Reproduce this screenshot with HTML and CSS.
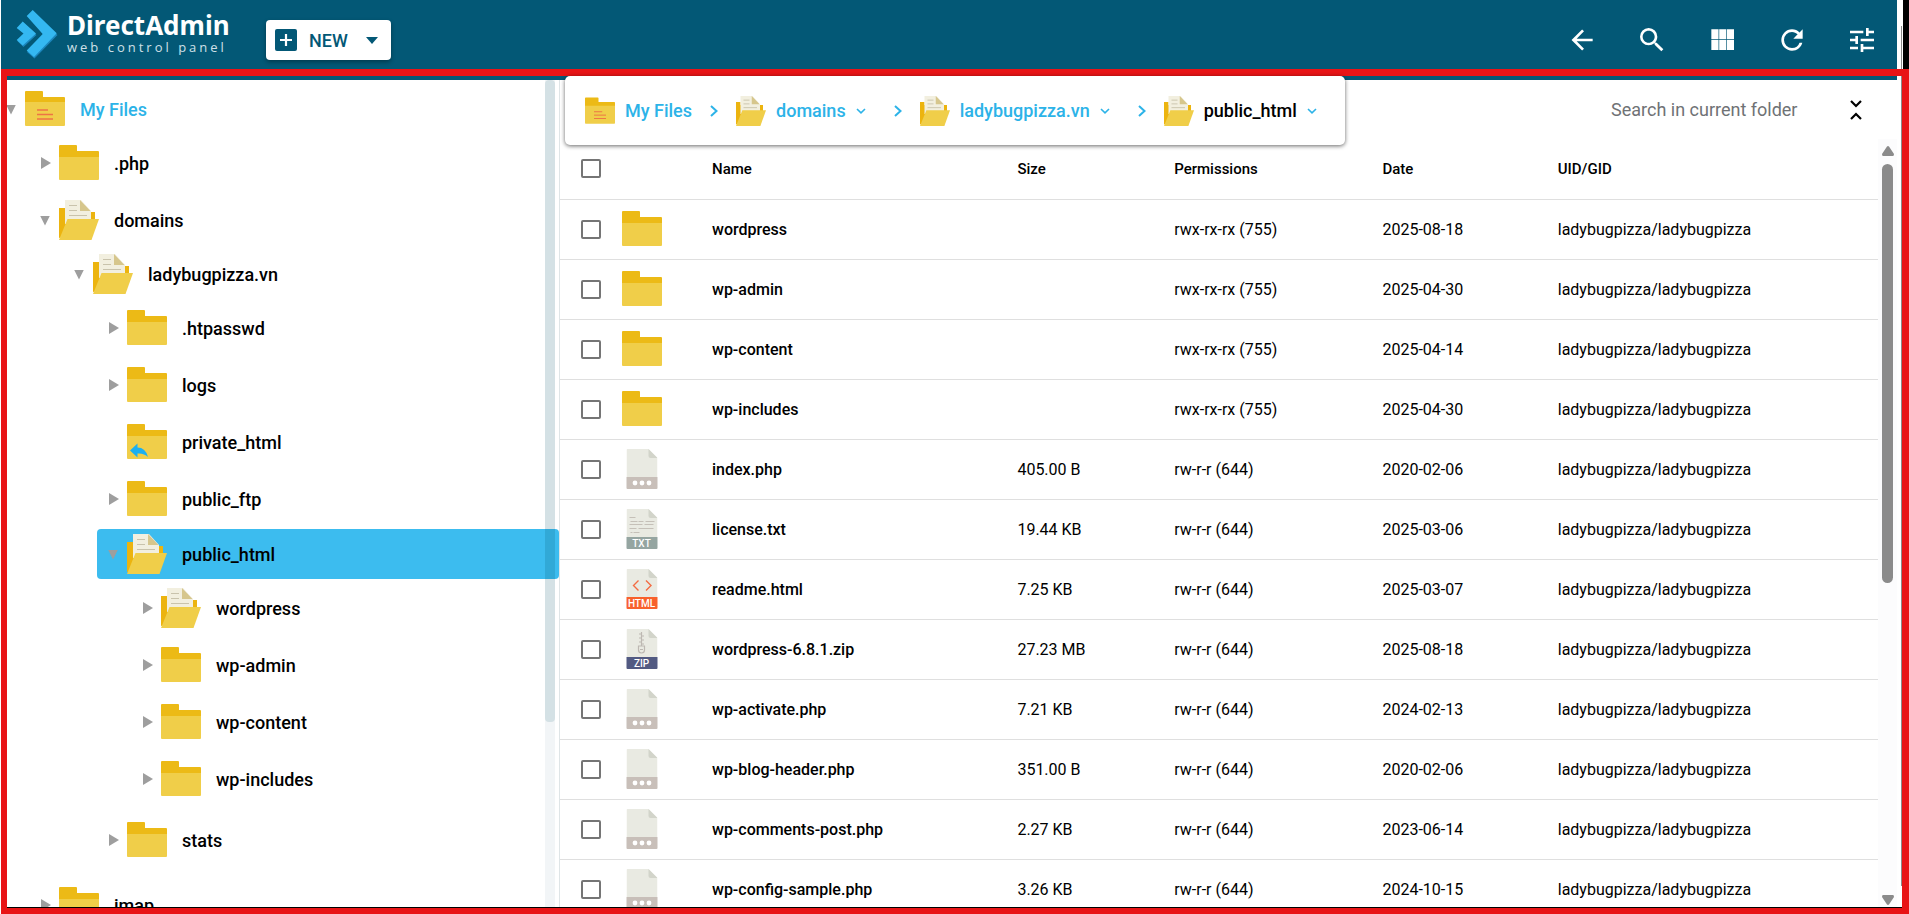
FILE: index.html
```html
<!DOCTYPE html>
<html lang="en">
<head>
<meta charset="utf-8">
<title>DirectAdmin - File Manager</title>
<link rel="stylesheet" href="styles.css">
</head>
<body>
<svg class="sprite" aria-hidden="true">
  <symbol id="folder" viewBox="0 0 40 36">
    <path fill="#ecba16" d="M1 0h16q1 0 1 1v5h21q1 0 1 1v10H0V1q0-1 1-1z"/>
    <path fill="#f0ce49" d="M0 12h40v22q0 1-1 1H1q-1 0-1-1z"/>
  </symbol>
  <symbol id="folder-home" viewBox="0 0 40 36">
    <path fill="#ecba16" d="M1 0h16q1 0 1 1v5h21q1 0 1 1v10H0V1q0-1 1-1z"/>
    <path fill="#f0ce49" d="M0 11h40v23q0 1-1 1H1q-1 0-1-1z"/>
    <path stroke="#ed7445" stroke-width="1.3" d="M12 19h11M12 23.500h16M12 28h16"/>
  </symbol>
  <symbol id="folder-link" viewBox="0 0 40 36">
    <path fill="#ecba16" d="M1 0h16q1 0 1 1v5h21q1 0 1 1v10H0V1q0-1 1-1z"/>
    <path fill="#f0ce49" d="M0 12h40v22q0 1-1 1H1q-1 0-1-1z"/>
    <path fill="#1cb0f0" d="M3 26.500l7.500-7v4q8 0 10.500 9.500-4-4-10.500-3.500v4z"/>
  </symbol>
  <symbol id="folder-open" viewBox="0 0 40 40">
    <path fill="#ecb40f" d="M0 8h6v4h30v14L20 32 0 38z"/>
    <path fill="#f2efdf" d="M6 0h16l10 11v13H6z"/>
    <path fill="#d6c68c" d="M21 0l10.500 11H21z"/>
    <path stroke="#c9c3ac" stroke-width="1.200" d="M10 5.500h8M10 10.500h8M10 15.500h18"/>
    <path fill="#f0ce49" d="M8.500 19H40l-7.500 21H0z"/>
  </symbol>
  <symbol id="page" viewBox="0 0 31 40">
    <path fill="#e9eae2" d="M1 0h21l9 9v19H0V1q0-1 1-1z"/>
    <path fill="#d2d4ca" d="M22 0l9 9h-7q-2 0-2-2z"/>
  </symbol>
  <symbol id="file" viewBox="0 0 31 40">
    <use href="#page"/>
    <path fill="#c8bfb9" d="M0 28h31v11q0 1-1 1H1q-1 0-1-1z"/>
    <circle cx="8.500" cy="34" r="2.400" fill="#fff"/><circle cx="15.500" cy="34" r="2.400" fill="#fff"/><circle cx="22.500" cy="34" r="2.400" fill="#fff"/>
  </symbol>
  <symbol id="chevron-right" viewBox="0 0 8 12"><path fill="none" stroke="#2cb3e8" stroke-width="2" d="M1 1l5.500 5L1 11"/></symbol>
  <symbol id="chevron-down" viewBox="0 0 10 6"><path fill="none" stroke="#2cb3e8" stroke-width="1.600" d="M1 1l4 3.800L9 1"/></symbol>
</svg>

<header class="header">
  <a class="logo" href="#">
    <svg class="logo-mark" viewBox="0 0 42 49" aria-hidden="true">
      <path fill="#1b86bd" d="M17.500 1.500l24 23.500-23 23.500-7.500-6.500 16-17.500zM7.500 13l13 12-13 12-6-5.700 7-7z"/>
      <path fill="#34b8f1" d="M16.700 0l24 23.300L18 47l-7.300-6.500L26.700 24 10.700 6zM6.700 11.500l13.300 12-13.300 12L.7 30l6.800-6.500L.7 18z"/>
    </svg>
    <span class="logo-text">
      <span class="logo-name">DirectAdmin</span>
      <span class="logo-tagline">web control panel</span>
    </span>
  </a>
  <button class="new-button" type="button">
    <svg width="22" height="22" viewBox="0 0 22 22" aria-hidden="true"><rect width="22" height="22" rx="2" fill="#035876"/><path stroke="#fff" stroke-width="2.200" d="M11 5v12M5 11h12"/></svg>
    <span>NEW</span>
    <svg class="new-caret" width="12" height="7" viewBox="0 0 12 7" aria-hidden="true"><path fill="#035876" d="M0 0h12L6 7z"/></svg>
  </button>
  <nav class="actions" aria-label="Tools">
    <button class="action" type="button" aria-label="Back"><svg viewBox="0 0 24 24"><path d="M20 11v2H8l5.500 5.500-1.420 1.420L4.160 12l7.920-7.920L13.500 5.500 8 11z"/></svg></button>
    <button class="action" type="button" aria-label="Search"><svg viewBox="0 0 24 24"><path d="M9.500 3A6.500 6.500 0 0 1 16 9.500c0 1.610-.59 3.090-1.560 4.230l.27.270h.790l5 5-1.500 1.500-5-5v-.790l-.27-.270A6.516 6.516 0 0 1 9.500 16a6.500 6.500 0 0 1 0-13m0 2C7 5 5 7 5 9.500S7 14 9.500 14 14 12 14 9.500 12 5 9.500 5z"/></svg></button>
    <button class="action" type="button" aria-label="Grid view"><svg viewBox="0 0 24 24"><path d="M15.700 4v7.500H21V4m-11.100 7.500h5.300V4H9.900M15.700 19.500H21V12h-5.300m-5.800 7.500h5.300V12H9.900M4 19.500h5.400V12H4m0-.500h5.400V4H4z"/></svg></button>
    <button class="action" type="button" aria-label="Refresh"><svg viewBox="0 0 24 24"><path d="M17.650 6.350A7.958 7.958 0 0 0 12 4a8 8 0 0 0-8 8 8 8 0 0 0 8 8c3.730 0 6.840-2.550 7.730-6h-2.080A5.990 5.990 0 0 1 12 18a6 6 0 0 1-6-6 6 6 0 0 1 6-6c1.660 0 3.140.690 4.220 1.780L13 11h7V4z"/></svg></button>
    <button class="action" type="button" aria-label="Settings"><svg viewBox="0 0 24 24"><path d="M3 17v2h6v-2H3M3 5v2h10V5H3m10 16v-2h8v-2h-8v-2h-2v6h2M7 9v2H3v2h4v2h2V9H7m14 4v-2H11v2h10m-6-4h2V7h4V5h-4V3h-2z"/></svg></button>
  </nav>
</header>

<main class="main">
  <aside class="sidebar">
    <ul class="tree">
      <li class="node open">
        <a class="row root" href="#"><i class="arrow down"></i><svg class="icon"><use href="#folder-home"/></svg><span>My Files</span></a>
        <ul>
          <li class="node"><a class="row" href="#"><i class="arrow"></i><svg class="icon"><use href="#folder"/></svg><span>.php</span></a></li>
          <li class="node open">
            <a class="row" href="#"><i class="arrow down"></i><svg class="icon tall"><use href="#folder-open"/></svg><span>domains</span></a>
            <ul>
              <li class="node open">
                <a class="row" href="#"><i class="arrow down"></i><svg class="icon tall"><use href="#folder-open"/></svg><span>ladybugpizza.vn</span></a>
                <ul>
                  <li class="node"><a class="row" href="#"><i class="arrow"></i><svg class="icon"><use href="#folder"/></svg><span>.htpasswd</span></a></li>
                  <li class="node"><a class="row" href="#"><i class="arrow"></i><svg class="icon"><use href="#folder"/></svg><span>logs</span></a></li>
                  <li class="node"><a class="row" href="#"><i class="arrow none"></i><svg class="icon"><use href="#folder-link"/></svg><span>private_html</span></a></li>
                  <li class="node"><a class="row" href="#"><i class="arrow"></i><svg class="icon"><use href="#folder"/></svg><span>public_ftp</span></a></li>
                  <li class="node open current">
                    <a class="row" href="#" aria-current="true"><i class="arrow down"></i><svg class="icon tall"><use href="#folder-open"/></svg><span>public_html</span></a>
                    <ul>
                      <li class="node"><a class="row" href="#"><i class="arrow"></i><svg class="icon tall"><use href="#folder-open"/></svg><span>wordpress</span></a></li>
                      <li class="node"><a class="row" href="#"><i class="arrow"></i><svg class="icon"><use href="#folder"/></svg><span>wp-admin</span></a></li>
                      <li class="node"><a class="row" href="#"><i class="arrow"></i><svg class="icon"><use href="#folder"/></svg><span>wp-content</span></a></li>
                      <li class="node"><a class="row" href="#"><i class="arrow"></i><svg class="icon"><use href="#folder"/></svg><span>wp-includes</span></a></li>
                    </ul>
                  </li>
                  <li class="node"><a class="row" href="#"><i class="arrow"></i><svg class="icon"><use href="#folder"/></svg><span>stats</span></a></li>
                </ul>
              </li>
            </ul>
          </li>
          <li class="node"><a class="row" href="#"><i class="arrow"></i><svg class="icon"><use href="#folder"/></svg><span>imap</span></a></li>
        </ul>
      </li>
    </ul>
    <div class="tree-scroll"><div class="tree-thumb"></div></div>
  </aside>

  <section class="content">
    <div class="toolbar">
      <nav class="crumbs" aria-label="Path">
        <a class="crumb" href="#"><svg class="crumb-icon"><use href="#folder-home"/></svg>My Files</a>
        <svg class="sep"><use href="#chevron-right"/></svg>
        <a class="crumb" href="#"><svg class="crumb-icon"><use href="#folder-open"/></svg>domains<svg class="more"><use href="#chevron-down"/></svg></a>
        <svg class="sep wide"><use href="#chevron-right"/></svg>
        <a class="crumb" href="#"><svg class="crumb-icon"><use href="#folder-open"/></svg>ladybugpizza.vn<svg class="more"><use href="#chevron-down"/></svg></a>
        <svg class="sep wide"><use href="#chevron-right"/></svg>
        <a class="crumb here" href="#" aria-current="page"><svg class="crumb-icon"><use href="#folder-open"/></svg>public_html<svg class="more"><use href="#chevron-down"/></svg></a>
      </nav>
      <input class="search" type="text" placeholder="Search in current folder" aria-label="Search in current folder">
      <button class="collapse" type="button" aria-label="Collapse"><svg width="12" height="20" viewBox="0 0 12 20"><path fill="none" stroke="#000" stroke-width="2.200" d="M1 1l5 5 5-5M1 19l5-5 5 5"/></svg></button>
    </div>

    <div class="listing">
      <table class="files">
        <colgroup><col class="c-check"><col class="c-icon"><col class="c-name"><col class="c-size"><col class="c-perm"><col class="c-date"><col class="c-owner"></colgroup>
        <thead>
          <tr><th><input type="checkbox" aria-label="Select all"></th><th></th><th>Name</th><th>Size</th><th>Permissions</th><th>Date</th><th>UID/GID</th></tr>
        </thead>
        <tbody>
          <tr><td><input type="checkbox" aria-label="Select wordpress"></td><td><svg class="icon"><use href="#folder"/></svg></td><td class="name">wordpress</td><td></td><td>rwx-rx-rx (755)</td><td>2025-08-18</td><td>ladybugpizza/ladybugpizza</td></tr>
          <tr><td><input type="checkbox" aria-label="Select wp-admin"></td><td><svg class="icon"><use href="#folder"/></svg></td><td class="name">wp-admin</td><td></td><td>rwx-rx-rx (755)</td><td>2025-04-30</td><td>ladybugpizza/ladybugpizza</td></tr>
          <tr><td><input type="checkbox" aria-label="Select wp-content"></td><td><svg class="icon"><use href="#folder"/></svg></td><td class="name">wp-content</td><td></td><td>rwx-rx-rx (755)</td><td>2025-04-14</td><td>ladybugpizza/ladybugpizza</td></tr>
          <tr><td><input type="checkbox" aria-label="Select wp-includes"></td><td><svg class="icon"><use href="#folder"/></svg></td><td class="name">wp-includes</td><td></td><td>rwx-rx-rx (755)</td><td>2025-04-30</td><td>ladybugpizza/ladybugpizza</td></tr>
          <tr><td><input type="checkbox" aria-label="Select index.php"></td><td><svg class="icon tall"><use href="#file"/></svg></td><td class="name">index.php</td><td>405.00 B</td><td>rw-r-r (644)</td><td>2020-02-06</td><td>ladybugpizza/ladybugpizza</td></tr>
          <tr><td><input type="checkbox" aria-label="Select license.txt"></td><td><svg class="icon tall" viewBox="0 0 31 40">
            <use href="#page"/>
            <path stroke="#c5c0b8" d="M3 8.500h6M4 12.500h7m1 0h5m2 0h9M3 15.500h13m2 0h9M3 19.500h7m2 0h15M4 23.500h2m1 0h6"/>
            <path fill="#95a5a1" d="M0 28h31v11q0 1-1 1H1q-1 0-1-1z"/>
            <text class="file-label" x="15" y="38">TXT</text>
          </svg></td><td class="name">license.txt</td><td>19.44 KB</td><td>rw-r-r (644)</td><td>2025-03-06</td><td>ladybugpizza/ladybugpizza</td></tr>
          <tr><td><input type="checkbox" aria-label="Select readme.html"></td><td><svg class="icon tall" viewBox="0 0 31 40">
            <use href="#page"/>
            <path fill="none" stroke="#f36c43" stroke-width="1.400" d="M12 11.500l-5 5 5 5M19.500 11.500l5 5-5 5"/>
            <path fill="#f8612c" d="M0 28h31v11q0 1-1 1H1q-1 0-1-1z"/>
            <text class="file-label" x="15" y="38">HTML</text>
          </svg></td><td class="name">readme.html</td><td>7.25 KB</td><td>rw-r-r (644)</td><td>2025-03-07</td><td>ladybugpizza/ladybugpizza</td></tr>
          <tr><td><input type="checkbox" aria-label="Select wordpress-6.8.1.zip"></td><td><svg class="icon tall" viewBox="0 0 31 40">
            <use href="#page"/>
            <path fill="none" stroke="#bdb8b2" stroke-width="1.200" d="M15 3v14M12.500 5h2.500M15 7h2.500M12.500 9h2.500M15 11h2.500M12.500 13h2.500M15 15h2.500M12 17h6v4a3 3 0 0 1-6 0zM13.500 20.500h3"/>
            <path fill="#525a82" d="M0 28h31v11q0 1-1 1H1q-1 0-1-1z"/>
            <text class="file-label" x="15" y="38">ZIP</text>
          </svg></td><td class="name">wordpress-6.8.1.zip</td><td>27.23 MB</td><td>rw-r-r (644)</td><td>2025-08-18</td><td>ladybugpizza/ladybugpizza</td></tr>
          <tr><td><input type="checkbox" aria-label="Select wp-activate.php"></td><td><svg class="icon tall"><use href="#file"/></svg></td><td class="name">wp-activate.php</td><td>7.21 KB</td><td>rw-r-r (644)</td><td>2024-02-13</td><td>ladybugpizza/ladybugpizza</td></tr>
          <tr><td><input type="checkbox" aria-label="Select wp-blog-header.php"></td><td><svg class="icon tall"><use href="#file"/></svg></td><td class="name">wp-blog-header.php</td><td>351.00 B</td><td>rw-r-r (644)</td><td>2020-02-06</td><td>ladybugpizza/ladybugpizza</td></tr>
          <tr><td><input type="checkbox" aria-label="Select wp-comments-post.php"></td><td><svg class="icon tall"><use href="#file"/></svg></td><td class="name">wp-comments-post.php</td><td>2.27 KB</td><td>rw-r-r (644)</td><td>2023-06-14</td><td>ladybugpizza/ladybugpizza</td></tr>
          <tr><td><input type="checkbox" aria-label="Select wp-config-sample.php"></td><td><svg class="icon tall"><use href="#file"/></svg></td><td class="name">wp-config-sample.php</td><td>3.26 KB</td><td>rw-r-r (644)</td><td>2024-10-15</td><td>ladybugpizza/ladybugpizza</td></tr>
        </tbody>
      </table>
      <div class="scrollbar">
        <svg width="12" height="10" viewBox="0 0 12 10" aria-hidden="true"><path fill="#8b8b8b" d="M6 0q1 0 2 2l4 6q0 2-1 2H1q-1 0-1-2l4-6q1-2 2-2z"/></svg>
        <div class="scroll-track"><div class="scroll-thumb"></div></div>
        <svg width="12" height="10" viewBox="0 0 12 10" aria-hidden="true"><path fill="#8b8b8b" d="M6 10q-1 0-2-2L0 2q0-2 1-2h10q1 0 1 2L8 8q-1 2-2 2z"/></svg>
      </div>
    </div>
  </section>
</main>
<div class="edge"></div>
<div class="edge-dark"></div>
<div class="frame"></div>
</body>
</html>
```
FILE: styles.css
```css
* { box-sizing: border-box; }

body {
  margin: 0;
  height: 100vh;
  padding: 0 12px 0 1px;
  display: flex;
  flex-direction: column;
  position: relative;
  overflow: hidden;
  background: #fff;
  color: #000;
  font-family: Roboto, "Liberation Sans", sans-serif;
  font-size: 16px;
}

a { color: inherit; text-decoration: none; }
button { border: 0; padding: 0; background: none; font: inherit; color: inherit; cursor: pointer; }
ul { list-style: none; margin: 0; padding: 0; }
svg { display: block; flex: none; }
.sprite { display: none; }

/* Header */
.header {
  flex: none;
  height: 80px;
  display: flex;
  align-items: center;
  padding-left: 15px;
  background: #035876;
  color: #fff;
}
.logo { display: flex; gap: 9px; width: 250px; margin-bottom: 12px; }
.logo-mark { width: 42px; height: 49px; }
.logo-text { display: flex; flex-direction: column; white-space: nowrap; }
.logo-name { font-family: "Noto Sans", "Open Sans", sans-serif; font-size: 26px; font-weight: 700; line-height: 30px; }
.logo-tagline { font-family: "Open Sans", sans-serif; font-size: 13px; font-weight: 400; line-height: 14px; letter-spacing: 3px; color: #cfe0e8; }
.new-button {
  display: flex;
  align-items: center;
  gap: 12px;
  height: 40px;
  padding: 0 13px 0 9px;
  border-radius: 4px;
  background: #fff;
  color: #035876;
  font-size: 18px;
  font-weight: 500;
  box-shadow: 0 2px 4px rgba(0, 0, 0, .35);
}
.new-caret { margin-left: 6px; }
.actions { display: flex; margin-left: auto; }
.action { width: 70px; height: 60px; display: grid; place-items: center; }
.action svg { width: 32px; height: 32px; fill: #fff; }

.main { flex: 1; min-height: 0; display: flex; }

/* Folder tree */
.sidebar { flex: none; width: 559px; position: relative; overflow: hidden; border-right: 1px solid #dfe5e7; }
.tree { margin: 4px 0 0 -6px; font-size: 18px; font-weight: 500; }
.node ul { margin: 4px 0 0 34px; display: flex; flex-direction: column; gap: 4px; }
.node { padding-bottom: 3px; }
.node.open { padding-bottom: 4px; }
.current { margin-top: -2px; }
.row { display: flex; align-items: center; height: 50px; padding-left: 12px; border-radius: 4px; }
.root { color: #2cb3e8; }
.icon { width: 40px; height: 36px; }
.icon.tall { height: 40px; }
.row span { margin-left: 15px; }
.arrow { width: 18px; flex: none; }
.arrow::before {
  content: "";
  display: block;
  width: 10px;
  height: 12px;
  background: #9e9e9e;
  clip-path: polygon(0 0, 100% 50%, 0 100%);
}
.arrow.down { margin-left: -1px; width: 19px; padding-top: 1px; }
.arrow.down::before { height: 10px; clip-path: polygon(0 0, 100% 0, 50% 100%); }
.arrow.none::before { display: none; }
.current > .row { background: #3cbcef; }
.tree-scroll { position: absolute; top: 0; right: 4px; bottom: 0; width: 10px; background: rgba(0, 60, 100, .05); }
.tree-thumb { height: 77%; border-radius: 4px; background: rgba(0, 80, 100, .12); }

/* Toolbar */
.content { flex: 1; min-width: 0; display: flex; flex-direction: column; }
.toolbar { flex: none; height: 59px; display: flex; align-items: center; }
.crumbs {
  position: relative;
  z-index: 3;
  align-self: flex-start;
  flex: none;
  height: 69px;
  margin: -4px auto 0 5px;
  padding: 0 28px 0 20px;
  display: flex;
  align-items: center;
  border-radius: 5px;
  background: #fff;
  box-shadow: 0 1px 4px rgba(0, 0, 0, .6);
  font-size: 18px;
  font-weight: 500;
}
.crumb { display: flex; align-items: center; color: #2cb3e8; }
.crumb.here { color: #000; }
.crumb-icon { width: 30px; height: 30px; margin-right: 10px; }
.sep { width: 8px; height: 12px; margin: 0 18px; }
.sep.wide { margin-left: 28px; }
.more { width: 10px; height: 6px; margin-left: 10px; }
.search { width: 204px; border: 0; padding: 0; outline: 0; background: none; font-family: inherit; font-size: 18px; }
.search::placeholder { color: #6f7275; opacity: 1; }
.collapse { width: 82px; height: 40px; display: grid; place-items: center; }

/* File list */
.listing { flex: 1; min-height: 0; display: flex; overflow: hidden; }
.files { flex: 1; align-self: flex-start; border-collapse: collapse; table-layout: fixed; width: 100%; }
.files tr { height: 60px; border-bottom: 1px solid #dfdfdf; }
.files th, .files td { padding: 0; text-align: left; white-space: nowrap; }
.files th { font-size: 15px; font-weight: 500; }
.files .name { font-weight: 500; }
.c-check { width: 62px; }
.c-icon { width: 90px; }
.c-size { width: 11.9%; }
.c-perm { width: 15.8%; }
.c-date { width: 13.3%; }
.c-owner { width: 24.3%; }
.files input {
  appearance: none;
  display: block;
  width: 20px;
  height: 19px;
  margin: 0 0 0 21px;
  border: 2px solid #757575;
  border-radius: 2px;
}
.file-label { fill: #fff; font: 500 10px Roboto, sans-serif; text-anchor: middle; }

.scrollbar { flex: none; width: 19px; padding: 7px 0 9px 4px; display: flex; flex-direction: column; gap: 8px; background: #fcfcfd; }
.scroll-track { flex: 1; }
.scroll-thumb { width: 11px; height: 58%; border-radius: 6px; background: #8b8b8b; }

/* Window edge and highlight frame */
.edge { position: absolute; top: 26px; right: 7px; bottom: 28px; width: 1px; background: #8b8b8b; }
.edge-dark { position: absolute; top: 0; right: 0; width: 6px; height: 69px; background: #000; }
.frame {
  position: absolute;
  z-index: 2;
  top: 69px;
  right: 0;
  bottom: 0;
  left: 1px;
  border: solid #e81416;
  border-width: 7px 7px 6px 6px;
  pointer-events: none;
}
.frame::after { content: ""; position: absolute; right: 0; bottom: 0; left: 0; height: 1px; background: #000; }
```
